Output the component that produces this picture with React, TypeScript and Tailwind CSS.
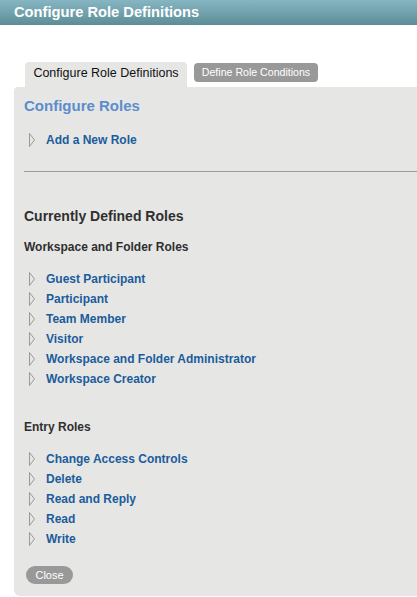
import React from "react";

const workspaceRoles = [
  "Guest Participant",
  "Participant",
  "Team Member",
  "Visitor",
  "Workspace and Folder Administrator",
  "Workspace Creator",
];

const entryRoles = ["Change Access Controls", "Delete", "Read and Reply", "Read", "Write"];

function Twisty() {
  return (
    <svg width="8" height="16" viewBox="0 0 8 16" className="shrink-0">
      <path d="M1.5 1.5 L6.5 8 L1.5 14.5 Z" fill="none" stroke="#9a9a9a" strokeWidth="1" />
    </svg>
  );
}

function RoleLink({ label }: { label: string }) {
  return (
    <div className="flex h-[20px] items-center pl-[4px]">
      <Twisty />
      <a href="#" className="ml-[10px] text-[12px] font-bold leading-[20px] text-[#1b5c9c]">
        {label}
      </a>
    </div>
  );
}

export default function App() {
  return (
    <div className="min-h-[597px] bg-white font-['Liberation_Sans',Arial,sans-serif]">
      <header className="flex h-[25px] items-center bg-gradient-to-b from-[#86b6c2] to-[#5d8e98] pl-[14px]">
        <h1 className="text-[14.7px] font-bold leading-none text-white">Configure Role Definitions</h1>
      </header>

      <div className="ml-[14px] mt-[37px]">
        <div className="flex items-start pl-[11px]">
          <div className="flex h-[25px] w-[162px] items-center justify-center rounded-t-[4px] bg-[#e6e6e5] pb-[2px] text-[12.5px] text-[#111]">
            Configure Role Definitions
          </div>
          <button className="ml-[7px] mt-[1px] flex h-[19px] w-[124px] items-center justify-center rounded-[4px] bg-[#999999] text-[10.6px] text-white">
            Define Role Conditions
          </button>
        </div>

        <section className="rounded-bl-[6px] rounded-tl-[4px] bg-[#e6e6e5] pb-[12px] pl-[10px] pt-[10px]">
          <h2 className="text-[15px] font-bold leading-[18px] text-[#5b8dcc]">Configure Roles</h2>
          <div className="mt-[15px]">
            <RoleLink label="Add a New Role" />
          </div>
          <hr className="mt-[21px] border-0 border-t border-[#9c9c9c]" />

          <h2 className="mt-[35px] text-[14px] font-bold leading-[18px] text-[#2f2f2f]">Currently Defined Roles</h2>
          <h3 className="mt-[14px] text-[12px] font-bold leading-[16px] text-[#2f2f2f]">Workspace and Folder Roles</h3>
          <div className="mt-[14px]">
            {workspaceRoles.map((r) => (
              <RoleLink key={r} label={r} />
            ))}
          </div>

          <h3 className="mt-[30px] text-[12px] font-bold leading-[16px] text-[#2f2f2f]">Entry Roles</h3>
          <div className="mt-[14px]">
            {entryRoles.map((r) => (
              <RoleLink key={r} label={r} />
            ))}
          </div>

          <button className="ml-[2px] mt-[17px] flex h-[18px] w-[47px] items-center justify-center rounded-full bg-[#999999] text-[11px] text-white">
            Close
          </button>
        </section>
      </div>
    </div>
  );
}
